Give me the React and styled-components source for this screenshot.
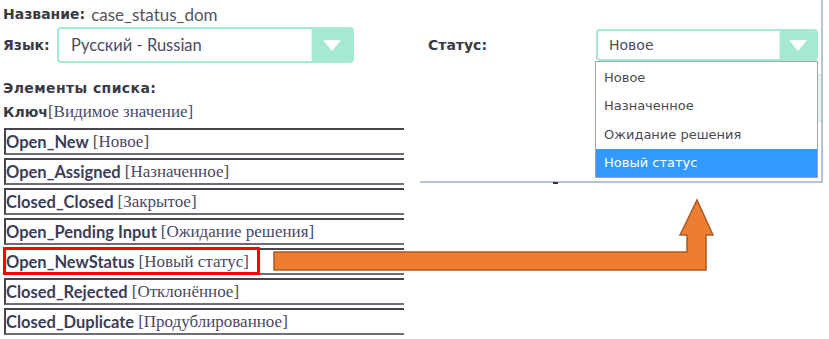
import styled, { createGlobalStyle } from 'styled-components';

const GlobalStyle = createGlobalStyle`
  html, body {
    margin: 0;
    padding: 0;
    background: #fff;
  }
  body {
    font-family: Lato, "Noto Sans", sans-serif;
  }
`;

// Whole page: two columns side by side
const Page = styled.div`
  position: relative;
  width: 829px;
  height: 339px;
  overflow: hidden;
  display: flex;
  align-items: flex-start;
`;

const LeftColumn = styled.div`
  width: 420px;
  padding: 4px 0 0 3px;
  box-sizing: border-box;
  display: flex;
  flex-direction: column;
`;

const Line = styled.div`
  display: flex;
  align-items: center;
  height: 20px;
  margin-top: ${(p) => p.$mt || 0}px;
  color: #3a3a44;
`;

// Cyrillic bold captions (wide, Verdana-like)
const Caption = styled.span`
  font-family: "DejaVu Sans", Verdana, sans-serif;
  font-weight: 700;
  font-size: 14px;
  letter-spacing: ${(p) => p.$ls || 0}px;
  color: #3a3a44;
  margin-right: ${(p) => p.$mr || 0}px;
`;

const Value = styled.span`
  font-family: Lato, sans-serif;
  font-size: 17px;
  color: #55555f;
`;

const Serif = styled.span`
  font-family: "Liberation Serif", "DejaVu Serif", serif;
  font-size: 17px;
  color: #4a4a62;
`;

const FieldRow = styled.div`
  display: flex;
  align-items: center;
  margin-top: ${(p) => p.$mt || 0}px;
`;

const FieldLabel = styled(Caption)`
  width: ${(p) => p.$w}px;
  flex-shrink: 0;
`;

// Mint select box with triangle button
const Select = styled.div`
  display: flex;
  width: ${(p) => p.$w}px;
  height: ${(p) => p.$h}px;
  box-sizing: border-box;
  border: 2px solid #a5e9d5;
  border-radius: 4px;
  background: #fff;
  overflow: hidden;
`;

const SelectText = styled.div`
  flex: 1;
  display: flex;
  align-items: center;
  padding-left: ${(p) => p.$pl}px;
  font-family: ${(p) => (p.$sys ? '"DejaVu Sans", Verdana, sans-serif' : 'Lato, "Noto Sans", sans-serif')};
  font-size: ${(p) => p.$fs}px;
  color: #4b4a66;
`;

const SelectButton = styled.div`
  width: ${(p) => p.$w}px;
  background: #a5e9d5;
  display: flex;
  align-items: center;
  justify-content: center;
  border-left: 1px solid #d8f4ec;
`;

const Triangle = () => (
  <svg width="18" height="11" viewBox="0 0 18 11">
    <path d="M0 0 H18 L9 11 Z" fill="#fff" />
  </svg>
);

const List = styled.div`
  margin-top: 6px;
  margin-left: 1px;
  display: flex;
  flex-direction: column;
  gap: 3px;
`;

const Row = styled.div`
  width: 400px;
  height: 27px;
  box-sizing: border-box;
  border-top: 2px solid #45454d;
  border-bottom: 2px solid #6e6e74;
  border-left: 2px solid #45454d;
  display: flex;
  align-items: stretch;
`;

const Entry = styled.div`
  position: relative;
  display: flex;
  align-items: center;
  white-space: nowrap;

  ${(p) =>
    p.$marked &&
    `
    &::after {
      content: '';
      position: absolute;
      left: -3px;
      right: -11px;
      top: -3px;
      bottom: -2px;
      border: 3px solid #ff0000;
    }
  `}
`;

const Key = styled.span`
  font-family: Lato, sans-serif;
  font-weight: 700;
  font-size: 16.5px;
  color: #3d3d58;
  margin-right: 4px;
`;

// Right column: status select with open dropdown
const RightColumn = styled.div`
  position: relative;
  width: 403px;
  height: 183px;
  box-sizing: border-box;
  padding-top: 29px;
  border-right: 2px solid #b9c4d3;
  border-bottom: 2px solid #b9c4d3;
`;

const StatusRow = styled.div`
  display: flex;
  align-items: center;
  padding-left: 8px;
`;

const BackStrip = styled.div`
  margin: 13px 0 0 300px;
  height: 46px;
  background: #e3f6f0;
  border-top: 1px solid #c8ebe0;
  border-bottom: 1px solid #c8ebe0;
`;

const Tick = styled.div`
  position: absolute;
  left: 133px;
  bottom: -3px;
  width: 5px;
  height: 2px;
  background: #333;
`;

const Dropdown = styled.div`
  position: absolute;
  left: 175px;
  top: 61px;
  width: 223px;
  box-sizing: border-box;
  border: 1px solid #a4a4a8;
  background: #fff;
  padding-top: 1px;
`;

const Option = styled.div`
  height: 28.5px;
  display: flex;
  align-items: center;
  padding-left: 8px;
  font-family: "DejaVu Sans", Verdana, sans-serif;
  font-size: 13px;
  color: ${(p) => (p.$active ? '#fff' : '#4a4a55')};
  background: ${(p) => (p.$active ? '#3399ff' : 'transparent')};
`;

const Overlay = styled.svg`
  position: absolute;
  left: 0;
  top: 0;
  pointer-events: none;
`;

const items = [
  ['Open_New', 'Новое'],
  ['Open_Assigned', 'Назначенное'],
  ['Closed_Closed', 'Закрытое'],
  ['Open_Pending Input', 'Ожидание решения'],
  ['Open_NewStatus', 'Новый статус'],
  ['Closed_Rejected', 'Отклонённое'],
  ['Closed_Duplicate', 'Продублированное'],
];

const options = ['Новое', 'Назначенное', 'Ожидание решения', 'Новый статус'];

export default function App() {
  return (
    <>
      <GlobalStyle />
      <Page>
        <LeftColumn>
          <Line>
            <Caption $mr={6}>Название:</Caption>
            <Value>case_status_dom</Value>
          </Line>
          <FieldRow $mt={3}>
            <FieldLabel $w={54}>Язык:</FieldLabel>
            <Select $w={297} $h={36}>
              <SelectText $pl={12} $fs={16.5}>Русский - Russian</SelectText>
              <SelectButton $w={40}>
                <Triangle />
              </SelectButton>
            </Select>
          </FieldRow>
          <Line $mt={15}>
            <Caption $ls={0.4}>Элементы списка:</Caption>
          </Line>
          <Line $mt={4}>
            <Caption>Ключ</Caption>
            <Serif>[Видимое значение]</Serif>
          </Line>
          <List>
            {items.map(([key, label]) => (
              <Row key={key}>
                <Entry $marked={key === 'Open_NewStatus'}>
                  <Key>{key}</Key>
                  <Serif>[{label}]</Serif>
                </Entry>
              </Row>
            ))}
          </List>
        </LeftColumn>

        <RightColumn>
          <StatusRow>
            <FieldLabel $w={168}>Статус:</FieldLabel>
            <Select $w={222} $h={32}>
              <SelectText $pl={11} $fs={14} $sys>Новое</SelectText>
              <SelectButton $w={36}>
                <Triangle />
              </SelectButton>
            </Select>
          </StatusRow>
          <BackStrip />
          <Tick />
          <Dropdown>
            {options.map((o) => (
              <Option key={o} $active={o === 'Новый статус'}>
                {o}
              </Option>
            ))}
          </Dropdown>
        </RightColumn>

        <Overlay width="829" height="339" viewBox="0 0 829 339">
          <path
            d="M274 252 H687 V235 H680 L697 200 L713 235 H706 V270 H274 Z"
            fill="#ed7d31"
            stroke="#ae5a21"
            strokeWidth="1.5"
          />
        </Overlay>
      </Page>
    </>
  );
}
